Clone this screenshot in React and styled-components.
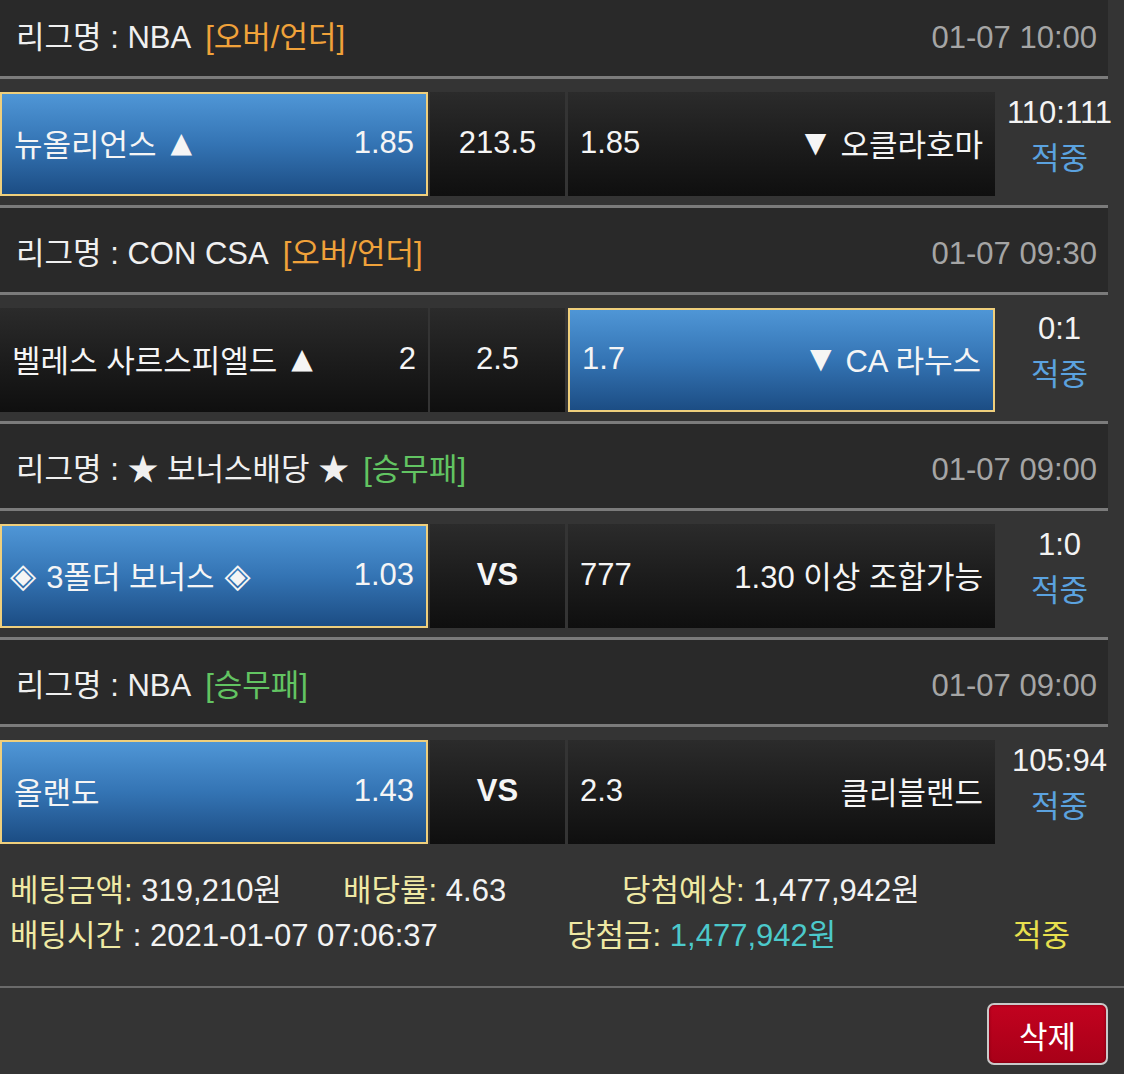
import React from "react";
import styled, { createGlobalStyle } from "styled-components";

const Global = createGlobalStyle`
  html, body { margin: 0; padding: 0; background: #343434; }
  body { font-family: "Liberation Sans", "Noto Sans CJK KR", sans-serif; }
`;

const Page = styled.div`
  width: 1124px;
  min-height: 1082px;
  margin-top: -8px;
  background: #343434;
  color: #f3f3f3;
  font-family: "Liberation Sans", "Noto Sans CJK KR", sans-serif;
  font-size: 31px;
  overflow: hidden;
`;

const LeagueHeader = styled.div`
  box-sizing: border-box;
  width: 1108px;
  height: 87px;
  padding: 7px 11px 0 16px;
  display: flex;
  align-items: center;
  justify-content: space-between;
  background: #292929;
  border-bottom: 3px solid #7b7b7b;
  line-height: 1;
`;

const LeagueTitle = styled.div`
  display: flex;
  align-items: center;
  color: #f0f0f0;
  white-space: pre;
`;

const Tag = styled.span`
  margin-left: 14px;
  color: ${(p) => p.$color};
`;

const Time = styled.span`
  color: #a5a5a5;
`;

const MatchRow = styled.div`
  box-sizing: border-box;
  height: 126px;
  padding: 13px 0 9px;
  display: flex;
  align-items: stretch;
`;

const Cell = styled.div`
  box-sizing: border-box;
  width: ${(p) => p.$w}px;
  margin-right: ${(p) => p.$gap || 0}px;
  display: flex;
  align-items: center;
  justify-content: ${(p) => (p.$center ? "center" : "space-between")};
  padding: 0 12px 3px;
  white-space: pre;
  color: #f5f5f5;
  font-weight: ${(p) => (p.$bold ? 700 : 400)};
  border: ${(p) => (p.$selected ? "2px solid #efcf7c" : "none")};
  background: ${(p) =>
    p.$selected
      ? "linear-gradient(180deg, #4f96d6 0%, #3474b4 50%, #1c4d84 100%)"
      : "linear-gradient(180deg, #2b2b2b 0%, #1b1b1b 55%, #0f0f0f 100%)"};
`;

const TeamName = styled.span`
  display: inline-flex;
  align-items: center;
  gap: 14px;
`;

const Mark = styled.span`
  font-family: "DejaVu Sans", sans-serif;
  font-size: ${(p) => (p.$diamond ? 34 : 28)}px;
  line-height: 1;
  margin: ${(p) => (p.$diamond ? "0 -4px" : "0")};
`;

const ScoreCol = styled.div`
  width: 129px;
  display: flex;
  flex-direction: column;
  align-items: center;
  justify-content: center;
  padding-bottom: 16px;
  line-height: 46px;
`;

const Score = styled.span`
  color: #f3f3f3;
`;

const Hit = styled.span`
  color: #5ba2df;
`;

const Rule = styled.div`
  width: 1108px;
  height: 3px;
  background: #7b7b7b;
`;

const Footer = styled.div`
  padding: 12px 0 31px 10px;
`;

const FooterLine = styled.div`
  display: flex;
  align-items: center;
  height: 45px;
  white-space: pre;
`;

const Field = styled.span`
  width: ${(p) => (p.$w ? `${p.$w}px` : "auto")};
  flex: none;
`;

const Label = styled.span`
  color: #efe9a4;
`;

const Value = styled.span`
  color: ${(p) => p.$color || "#f3f3f3"};
`;

const FooterRule = styled.div`
  height: 2px;
  background: #6a6a6a;
`;

const ButtonBar = styled.div`
  display: flex;
  justify-content: flex-end;
  padding: 15px 16px 0 0;
`;

const DeleteButton = styled.button`
  box-sizing: border-box;
  width: 121px;
  height: 62px;
  border: 2px solid #c9c9c9;
  border-radius: 7px;
  background: linear-gradient(180deg, #c2021f 0%, #a80018 100%);
  color: #ffffff;
  font-family: "Liberation Sans", "Noto Sans CJK KR", sans-serif;
  font-size: 31px;
  padding: 0;
  box-shadow: inset 0 0 3px rgba(0, 0, 0, 0.4);
`;

const matches = [
  {
    league: "리그명 : NBA",
    tag: "[오버/언더]",
    tagColor: "#f0a23a",
    time: "01-07 10:00",
    home: ["뉴올리언스", "▲"],
    homeOdds: "1.85",
    mid: "213.5",
    awayOdds: "1.85",
    away: ["▼", "오클라호마"],
    pick: "home",
    score: "110:111",
  },
  {
    league: "리그명 : CON CSA",
    tag: "[오버/언더]",
    tagColor: "#f0a23a",
    time: "01-07 09:30",
    home: ["벨레스 사르스피엘드", "▲"],
    homeOdds: "2",
    mid: "2.5",
    awayOdds: "1.7",
    away: ["▼", "CA 라누스"],
    pick: "away",
    score: "0:1",
  },
  {
    league: "리그명 : ★ 보너스배당 ★",
    tag: "[승무패]",
    tagColor: "#62c462",
    time: "01-07 09:00",
    home: ["◈", "3폴더 보너스", "◈"],
    homeOdds: "1.03",
    mid: "VS",
    midBold: true,
    awayOdds: "777",
    away: ["1.30 이상 조합가능"],
    pick: "home",
    score: "1:0",
  },
  {
    league: "리그명 : NBA",
    tag: "[승무패]",
    tagColor: "#62c462",
    time: "01-07 09:00",
    home: ["올랜도"],
    homeOdds: "1.43",
    mid: "VS",
    midBold: true,
    awayOdds: "2.3",
    away: ["클리블랜드"],
    pick: "home",
    score: "105:94",
  },
];

const isMark = (s) => s === "▲" || s === "▼" || s === "◈";

function Team({ parts }) {
  return (
    <TeamName>
      {parts.map((s, k) =>
        isMark(s) ? (
          <Mark key={k} $diamond={s === "◈"}>
            {s}
          </Mark>
        ) : (
          <span key={k}>{s}</span>
        )
      )}
    </TeamName>
  );
}

export default function App() {
  return (
    <>
      <Global />
      <Page>
        {matches.map((m, i) => (
          <div key={i}>
            <LeagueHeader>
              <LeagueTitle>
                {m.league}
                <Tag $color={m.tagColor}>{m.tag}</Tag>
              </LeagueTitle>
              <Time>{m.time}</Time>
            </LeagueHeader>
            <MatchRow>
              <Cell $w={428} $gap={2} $selected={m.pick === "home"}>
                <Team parts={m.home} />
                <span>{m.homeOdds}</span>
              </Cell>
              <Cell $w={135} $gap={3} $center $bold={m.midBold}>
                {m.mid}
              </Cell>
              <Cell $w={427} $selected={m.pick === "away"}>
                <span>{m.awayOdds}</span>
                <Team parts={m.away} />
              </Cell>
              <ScoreCol>
                <Score>{m.score}</Score>
                <Hit>적중</Hit>
              </ScoreCol>
            </MatchRow>
            {i < matches.length - 1 && <Rule />}
          </div>
        ))}
        <Footer>
          <FooterLine>
            <Field $w={333}>
              <Label>베팅금액:</Label>
              <Value> 319,210원</Value>
            </Field>
            <Field $w={279}>
              <Label>배당률:</Label>
              <Value> 4.63</Value>
            </Field>
            <Field>
              <Label>당첨예상:</Label>
              <Value> 1,477,942원</Value>
            </Field>
          </FooterLine>
          <FooterLine>
            <Field $w={557}>
              <Label>배팅시간</Label>
              <Value> : 2021-01-07 07:06:37</Value>
            </Field>
            <Field $w={446}>
              <Label>당첨금:</Label>
              <Value $color="#4cc9cb"> 1,477,942원</Value>
            </Field>
            <Field>
              <Value $color="#e8e04e">적중</Value>
            </Field>
          </FooterLine>
        </Footer>
        <FooterRule />
        <ButtonBar>
          <DeleteButton>삭제</DeleteButton>
        </ButtonBar>
      </Page>
    </>
  );
}
